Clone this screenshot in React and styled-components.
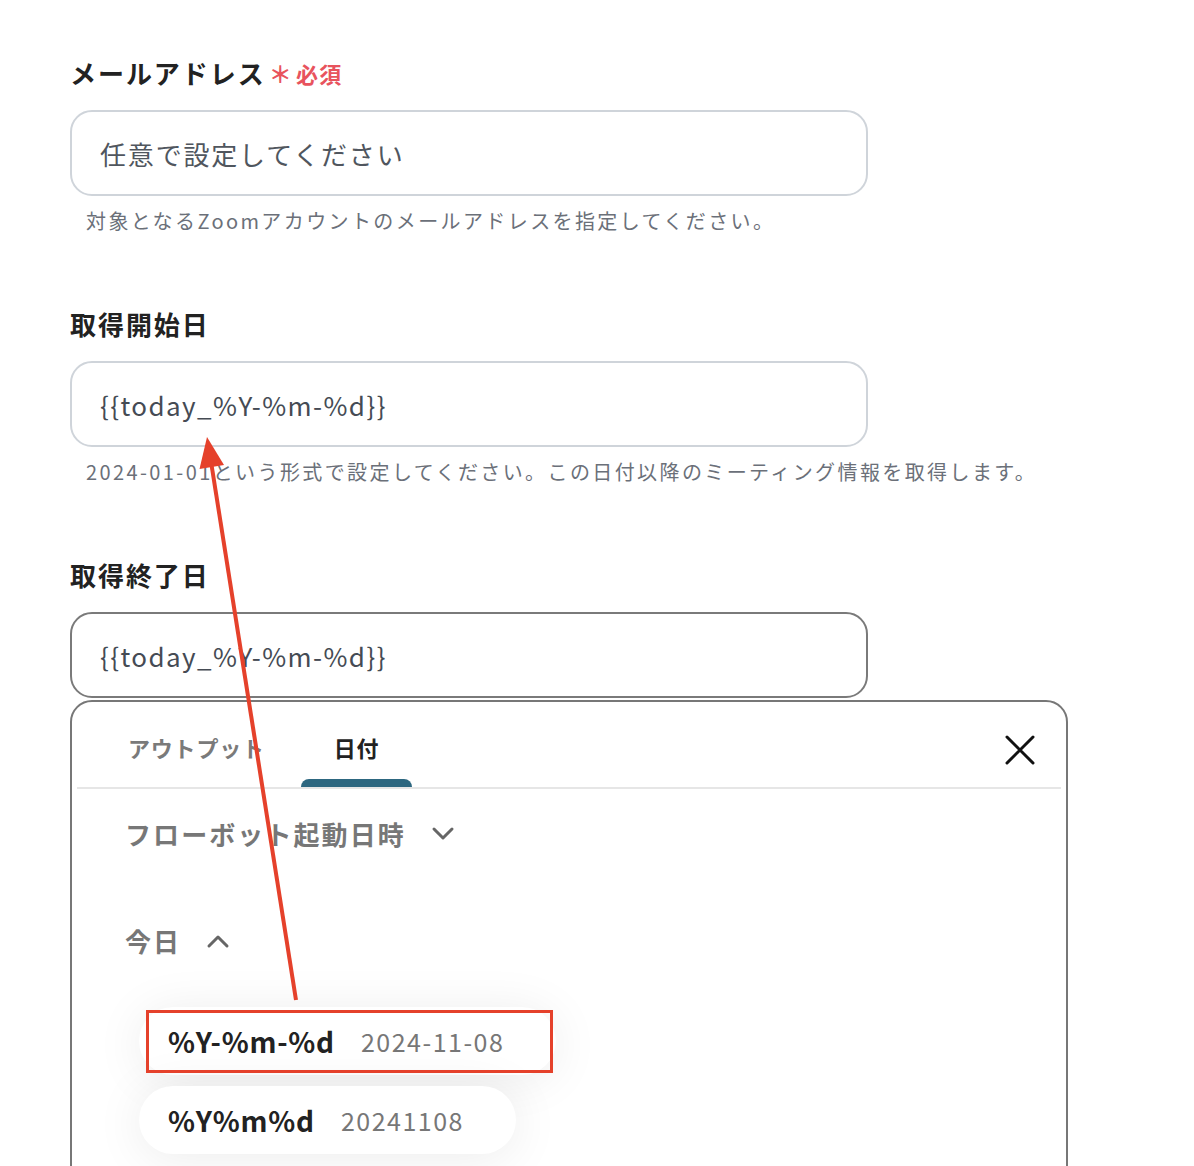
import styled, { createGlobalStyle } from "styled-components"

const GlobalStyle = createGlobalStyle`
    html, body {
        margin: 0;
        padding: 0;
        background: #fff;
    }
    body {
        font-family: "Noto Sans CJK JP", "Noto Sans", sans-serif;
        color: #222;
        letter-spacing: 0.05em;
    }
`

const fields = [
    {
        label: "メールアドレス",
        required: true,
        value: "任意で設定してください",
        placeholder: true,
        help: "対象となるZoomアカウントのメールアドレスを指定してください。",
    },
    {
        label: "取得開始日",
        value: "{{today_%Y-%m-%d}}",
        help: "2024-01-01という形式で設定してください。この日付以降のミーティング情報を取得します。",
    },
    {
        label: "取得終了日",
        value: "{{today_%Y-%m-%d}}",
        focused: true,
    },
]

const formats = [
    { key: "%Y-%m-%d", sample: "2024-11-08" },
    { key: "%Y%m%d", sample: "20241108" },
]

function Chevron({ up }) {
    return (
        <svg width="24" height="16" viewBox="0 0 24 16" fill="none">
            <path
                d={up ? "M3 13 L12 4 L21 13" : "M3 3 L12 12 L21 3"}
                stroke="#666"
                strokeWidth="3"
                strokeLinecap="round"
                strokeLinejoin="round"
            />
        </svg>
    )
}

function CloseIcon() {
    return (
        <svg width="30" height="30" viewBox="0 0 30 30" fill="none">
            <path d="M2 2 L28 28 M28 2 L2 28" stroke="#111" strokeWidth="3" strokeLinecap="round" />
        </svg>
    )
}

export default function App() {
    return (
        <Page>
            <GlobalStyle />
            {fields.map((f, i) => (
                <Field key={i}>
                    <Label>
                        {f.label}
                        {f.required && (
                            <Required>
                                <span>＊</span>必須
                            </Required>
                        )}
                    </Label>
                    <InputBox $focused={f.focused} $placeholder={f.placeholder}>
                        {f.value}
                    </InputBox>
                    {f.help && <Help>{f.help}</Help>}
                </Field>
            ))}

            <Panel>
                <TabRow>
                    <Tab>アウトプット</Tab>
                    <Tab $active>日付</Tab>
                    <CloseButton>
                        <CloseIcon />
                    </CloseButton>
                </TabRow>
                <PanelBody>
                    <Group>
                        フローボット起動日時
                        <Chevron />
                    </Group>
                    <Group $open>
                        今日
                        <Chevron up />
                    </Group>
                    <ChipList>
                        {formats.map((f) => (
                            <Chip key={f.key}>
                                <strong>{f.key}</strong>
                                <span>{f.sample}</span>
                            </Chip>
                        ))}
                    </ChipList>
                </PanelBody>
            </Panel>

            {/* annotation overlay: arrow + highlight box */}
            <Annotation width="1194" height="1166" viewBox="0 0 1194 1166">
                <line x1="296" y1="1000" x2="211.7" y2="466" stroke="#e5412b" strokeWidth="4" />
                <polygon points="207,437 224,465 199.5,469" fill="#e5412b" />
                <rect x="147.5" y="1011.5" width="404" height="60" fill="none" stroke="#e5412b" strokeWidth="3" />
            </Annotation>
        </Page>
    )
}

const Page = styled.div`
    position: relative;
    height: 1166px;
    overflow: hidden;
    padding: 55px 0 0 70px;
    box-sizing: border-box;
`
const Field = styled.section`
    width: 798px;
    margin-bottom: 71px;
    &:nth-of-type(3) {
        margin-bottom: 0;
    }
`
const Label = styled.h2`
    display: flex;
    align-items: center;
    margin: 0 0 19px;
    font-size: 26px;
    line-height: 36px;
    font-weight: 700;
    color: #222;
    letter-spacing: 0.075em;
`
const Required = styled.span`
    display: flex;
    align-items: center;
    margin-left: 3px;
    font-size: 22px;
    font-weight: 700;
    color: #e8535d;
    letter-spacing: 0.06em;
    span {
        font-size: 23px;
        margin-right: 3px;
    }
`
const InputBox = styled.div`
    display: flex;
    align-items: center;
    height: 86px;
    box-sizing: border-box;
    padding: 0 28px;
    border: 2px solid ${(p) => (p.$focused ? "#7a7a7a" : "#cfd4da")};
    border-radius: 22px;
    font-size: 26px;
    color: ${(p) => (p.$placeholder ? "#50565e" : "#454b54")};
    letter-spacing: ${(p) => (p.$placeholder ? "0.07em" : "0.055em")};
`
const Help = styled.p`
    margin: 11px 0 0 16px;
    font-size: 20px;
    line-height: 28px;
    color: #6b7079;
    letter-spacing: 2.4px;
    white-space: nowrap;
`
const Panel = styled.div`
    margin-top: 2px;
    width: 998px;
    box-sizing: border-box;
    padding: 0 5px 60px;
    border: 2px solid #777;
    border-radius: 22px;
    background: #fff;
`
const TabRow = styled.div`
    display: flex;
    align-items: flex-start;
    gap: 3px;
    padding-left: 18px;
    border-bottom: 2px solid #e6e6e6;
`
const Tab = styled.div`
    display: flex;
    flex-direction: column;
    align-items: center;
    padding: 29px 33px 0;
    font-size: 22px;
    line-height: 32px;
    font-weight: 700;
    color: ${(p) => (p.$active ? "#222" : "#7a7a7a")};
    &::after {
        content: "";
        align-self: stretch;
        margin: 16px -33px 0;
        height: 8px;
        border-radius: 8px 8px 0 0;
        background: ${(p) => (p.$active ? "#2d6780" : "transparent")};
    }
`
const CloseButton = styled.div`
    display: flex;
    margin: 33px 26px 0 auto;
`
const PanelBody = styled.div`
    padding: 27px 0 0 48px;
`
const Group = styled.div`
    display: flex;
    align-items: center;
    gap: 25px;
    margin-bottom: ${(p) => (p.$open ? "48px" : "71px")};
    font-size: 26px;
    line-height: 36px;
    font-weight: 700;
    color: #777;
    letter-spacing: 0.08em;
`
const ChipList = styled.div`
    display: flex;
    flex-direction: column;
    align-items: flex-start;
    gap: 11px;
    margin-left: 14px;
`
const Chip = styled.div`
    display: flex;
    align-items: center;
    gap: 26px;
    height: 68px;
    box-sizing: border-box;
    padding: 0 52px 0 29px;
    border-radius: 34px;
    background: #fff;
    box-shadow: 0 4px 50px rgba(0, 0, 0, 0.08);
    strong {
        font-size: 28px;
        font-weight: 700;
        color: #222;
    }
    span {
        font-size: 25px;
        color: #777;
        letter-spacing: 0.06em;
    }
`
const Annotation = styled.svg`
    position: absolute;
    left: 0;
    top: 0;
    pointer-events: none;
`
